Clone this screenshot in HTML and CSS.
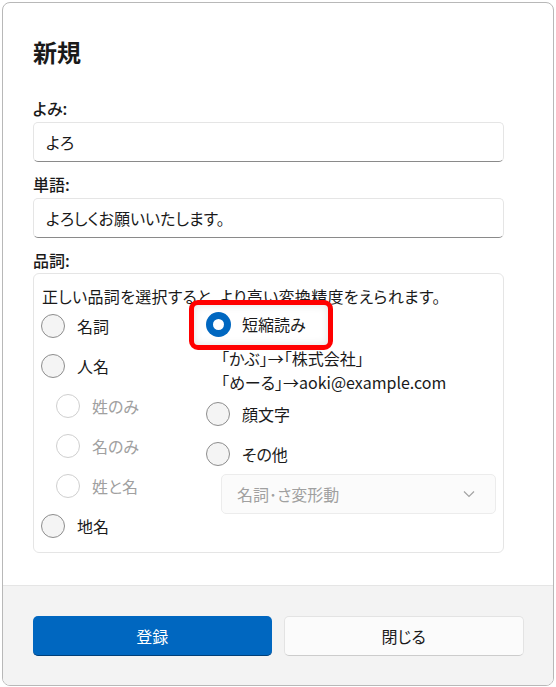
FILE: index.html
```html
<!DOCTYPE html>
<html lang="ja">
<head>
<meta charset="utf-8">
<title>新規</title>
<link rel="stylesheet" href="styles.css">
</head>
<body>
<div class="window">
  <div class="content">
    <div class="title">新規</div>
    <div class="label label-first">よみ:</div>
    <div class="textbox">よろ</div>
    <div class="label">単語:</div>
    <div class="textbox">よろしくお願いいたします。</div>
    <div class="label label-group">品詞:</div>
    <div class="group">
      <div class="intro">正しい品詞を選択すると、より高い変換精度をえられます。</div>
      <div class="columns">
        <div class="col-left">
          <div class="radio"><span class="circle"></span><span class="rlabel">名詞</span></div>
          <div class="radio"><span class="circle"></span><span class="rlabel">人名</span></div>
          <div class="radio sub disabled"><span class="circle"></span><span class="rlabel">姓のみ</span></div>
          <div class="radio sub disabled"><span class="circle"></span><span class="rlabel">名のみ</span></div>
          <div class="radio sub disabled"><span class="circle"></span><span class="rlabel">姓と名</span></div>
          <div class="radio"><span class="circle"></span><span class="rlabel">地名</span></div>
        </div>
        <div class="col-right">
          <div class="radio checked highlight"><span class="circle"></span><span class="rlabel">短縮読み</span></div>
          <div class="desc">
            <div class="desc-line">「かぶ」→「株式会社」</div>
            <div class="desc-line">「めーる」→aoki@example.com</div>
          </div>
          <div class="radio"><span class="circle"></span><span class="rlabel">顔文字</span></div>
          <div class="radio"><span class="circle"></span><span class="rlabel">その他</span></div>
          <div class="combo">
            <span class="combo-text">名詞･さ変形動</span>
            <svg class="chevron" width="12" height="8" viewBox="0 0 12 8"><path d="M1 1.5 L6 6.5 L11 1.5" fill="none" stroke="#a3a3a3" stroke-width="1.2"/></svg>
          </div>
        </div>
      </div>
    </div>
  </div>
  <div class="footer">
    <div class="btn btn-primary">登録</div>
    <div class="btn btn-secondary">閉じる</div>
  </div>
</div>
</body>
</html>
```
FILE: styles.css
```css
*, *::before, *::after { box-sizing: border-box; }
html, body {
  margin: 0;
  padding: 0;
  background: #ffffff;
}
body {
  font-family: "Noto Sans CJK JP", "Noto Sans", sans-serif;
  font-size: 16px;
  color: #1a1a1a;
  font-feature-settings: "palt";
}
.window {
  margin: 2px 0 0 2px;
  width: 552px;
  height: 684px;
  border: 1px solid #b8b8b8;
  border-radius: 8px;
  overflow: hidden;
  display: flex;
  flex-direction: column;
  background: #ffffff;
}
.content {
  flex: 1;
  padding: 33px 49px 0 30px;
}
.title {
  font-size: 24px;
  line-height: 32px;
  font-weight: 700;
  height: 32px;
}
.label {
  font-size: 16px;
  line-height: 20px;
  height: 20px;
  font-weight: 500;
  margin-top: 12px;
  margin-bottom: 4px;
}
.label-first { margin-top: 30px; }
.label-group { margin-bottom: 3px; }
.textbox {
  height: 40px;
  border: 1px solid #e5e5e5;
  border-bottom-color: #8a8a8a;
  border-radius: 5px;
  padding-left: 12px;
  display: flex;
  align-items: center;
  font-size: 16px;
  background: #ffffff;
}
.group {
  height: 280px;
  border: 1px solid #e5e5e5;
  border-radius: 6px;
  padding: 12px 6px 0 7px;
}
.intro {
  line-height: 20px;
  height: 20px;
  padding-left: 1px;
  letter-spacing: 0.3px;
  white-space: nowrap;
}
.columns {
  display: grid;
  grid-template-columns: 165px 1fr;
}
.col-right { margin-top: -2px; }
.radio {
  height: 40px;
  display: flex;
  align-items: center;
  position: relative;
}
.radio.sub { padding-left: 15px; }
.circle {
  width: 24px;
  height: 24px;
  border-radius: 50%;
  border: 1px solid #8d8d8d;
  background: #f4f4f4;
  flex: none;
  position: relative;
}
.rlabel {
  margin-left: 12px;
  line-height: 20px;
  position: relative;
}
.disabled .circle {
  border-color: #cfcfcf;
  background: #ffffff;
}
.disabled .rlabel { color: #a0a0a0; }
.checked .circle {
  width: 25px;
  height: 25px;
  border: none;
  background: #0067c0;
}
.checked .circle::after {
  content: "";
  position: absolute;
  left: 7px;
  top: 7px;
  width: 11px;
  height: 11px;
  border-radius: 50%;
  background: #ffffff;
}
.checked .rlabel { margin-left: 11px; }
.highlight::before {
  content: "";
  position: absolute;
  left: -17px;
  top: -4px;
  width: 144px;
  height: 50px;
  border: 5px solid #ff0000;
  border-radius: 9px;
  box-shadow: inset 0 0 8px rgba(0, 0, 0, 0.12);
}
.desc {
  padding-left: 15px;
  margin-top: 2px;
}
.desc-line {
  line-height: 24px;
  height: 24px;
  white-space: nowrap;
}
.combo {
  margin-left: 15px;
  height: 40px;
  width: 275px;
  border: 1px solid #ececec;
  border-radius: 5px;
  background: #fbfbfb;
  display: flex;
  align-items: center;
  justify-content: space-between;
  padding: 0 20px 0 15px;
}
.combo-text { color: #a0a0a0; }
.chevron { display: block; }
.footer {
  height: 100px;
  border-top: 1px solid #e5e5e5;
  background: #f3f3f3;
  padding: 30px 29px 0 30px;
  display: flex;
  gap: 12px;
}
.btn {
  flex: 1;
  height: 40px;
  border-radius: 5px;
  display: flex;
  align-items: center;
  justify-content: center;
  font-size: 16px;
}
.btn-primary {
  background: #0067c0;
  color: #ffffff;
  border-bottom: 1px solid #003f78;
}
.btn-secondary {
  background: #fbfbfb;
  border: 1px solid #e3e3e3;
  border-bottom-color: #cccccc;
  color: #1a1a1a;
}
```
